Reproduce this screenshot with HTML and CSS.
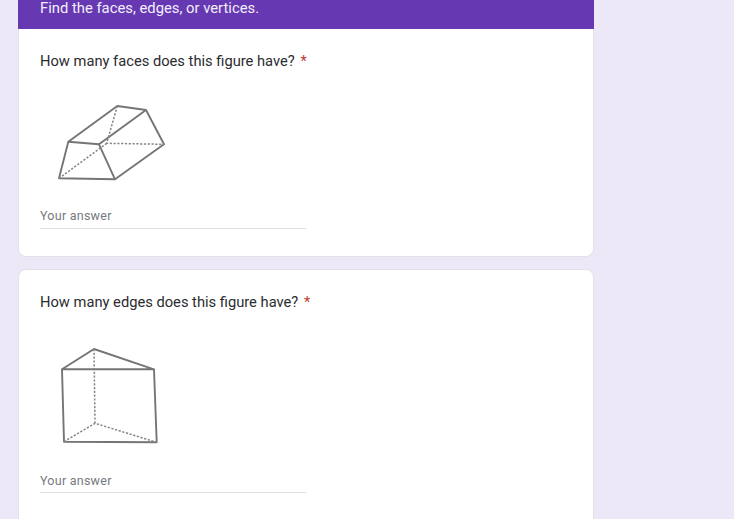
FILE: index.html
```html
<!DOCTYPE html>
<html lang="en">
<head>
    <meta charset="UTF-8">
    <meta name="viewport" content="width=device-width, initial-scale=1.0">
    <title>Faces, edges and vertices</title>
    <link rel="stylesheet" href="styles.css">
</head>
<body>
    <div class="form-container">
        <div class="form-header">Find the faces, edges, or vertices.</div>

        <div class="card card-first">
            <div class="question">How many faces does this figure have? <span class="required">*</span></div>
            <svg class="figure figure-faces" viewBox="0 0 140 109">
                <g class="edges">
                    <path d="M28.3 53.7 77.3 18 106 22 124 56.3 75 91.3 19 90.3Z"/>
                    <path d="M28.3 53.7 59 56.3 75 91.3"/>
                    <path d="M59 56.3 106 22"/>
                </g>
                <g class="hidden-edges">
                    <path d="M77.3 18 66.7 55.3 124 56.3"/>
                    <path d="M66.7 55.3 19 90.3"/>
                </g>
            </svg>
            <div class="answer">Your answer</div>
        </div>

        <div class="card card-last">
            <div class="question">How many edges does this figure have? <span class="required">*</span></div>
            <svg class="figure figure-edges" viewBox="0 0 140 132">
                <g class="edges">
                    <path d="M54 20 22 40.3 114 40.3Z"/>
                    <path d="M22 40.3 24 112.7 116.7 113.3 114 40.3"/>
                </g>
                <g class="hidden-edges">
                    <path d="M54 20 55 94.3"/>
                    <path d="M24 112.7 55 94.3 116.7 113.3"/>
                </g>
            </svg>
            <div class="answer">Your answer</div>
        </div>
    </div>
</body>
</html>
```

FILE: styles.css
```css
html, body {
    height: 100%;
}

body {
    background-color: #ece8f8;
    margin: 0;
    overflow: hidden;
    font-family: "Roboto", "Liberation Sans", sans-serif;
    color: #2b2c2f;
}

.form-container {
    width: 576px;
    margin-left: 18px;
}

.form-header {
    background-color: #6639b2;
    color: #f3eefa;
    height: 29px;
    padding-left: 22px;
    font-size: 14.8px;
    line-height: 17px;
}

.card {
    background-color: #fff;
    border: 1px solid #e2e1e8;
    border-radius: 8px;
    padding: 22px 21px 27px;
}

.card-first {
    border-top: none;
    border-radius: 0 0 8px 8px;
    margin-bottom: 12px;
}

.card-last {
    padding-bottom: 50px;
}

.question {
    font-size: 14.7px;
    line-height: 21px;
}

.required {
    color: #c5392f;
    margin-left: 2px;
}

/* Figures are drawn in the card's own coordinates */
.figure {
    display: block;
    width: 140px;
    margin: 16px 0 10px;
    filter: blur(0.5px);
}

.figure-faces {
    height: 109px;
}

.figure-edges {
    height: 132px;
    margin-bottom: 11px;
}

.edges path,
.hidden-edges path {
    fill: none;
    stroke: #757575;
    stroke-linejoin: round;
}

.edges path {
    stroke-width: 1.9;
}

.hidden-edges path {
    stroke: #858585;
    stroke-width: 1.5;
    stroke-dasharray: 2.2 1.6;
}

.answer {
    width: 266px;
    height: 21px;
    border-bottom: 1px solid #dfdfe3;
    color: #76797e;
    font-size: 12.5px;
    line-height: 17px;
    letter-spacing: 0.25px;
}

.card-last .answer {
    height: 20px;
}
```
